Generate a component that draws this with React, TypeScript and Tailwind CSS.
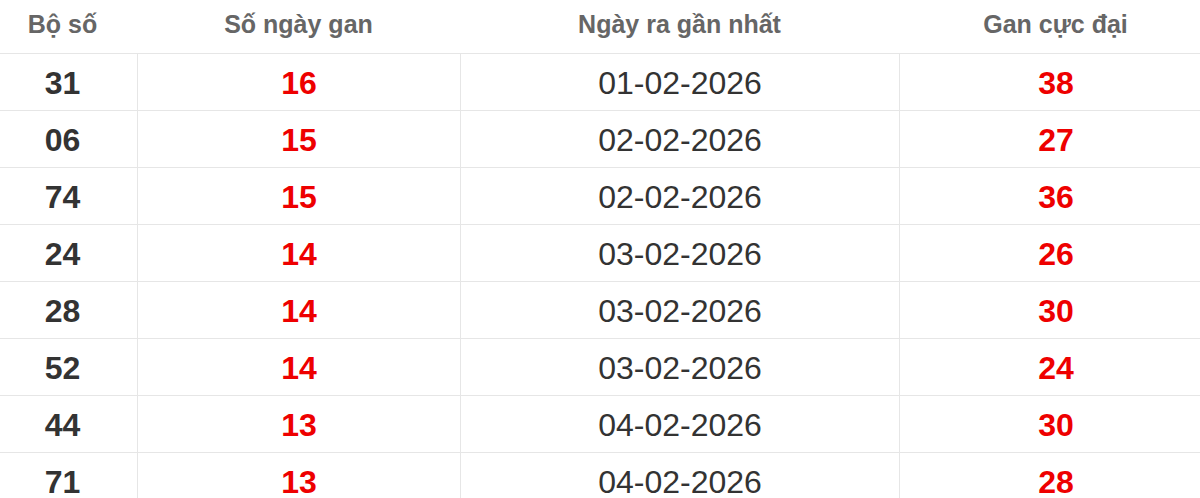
const ROWS = [
  { bo: "31", days: "16", last: "01-02-2026", max: "38" },
  { bo: "06", days: "15", last: "02-02-2026", max: "27" },
  { bo: "74", days: "15", last: "02-02-2026", max: "36" },
  { bo: "24", days: "14", last: "03-02-2026", max: "26" },
  { bo: "28", days: "14", last: "03-02-2026", max: "30" },
  { bo: "52", days: "14", last: "03-02-2026", max: "24" },
  { bo: "44", days: "13", last: "04-02-2026", max: "30" },
  { bo: "71", days: "13", last: "04-02-2026", max: "28" },
];

const HEADERS = ["Bộ số", "Số ngày gan", "Ngày ra gần nhất", "Gan cực đại"];

export default function App() {
  return (
    <div className="w-[1200px] h-[498px] overflow-hidden bg-white" style={{ fontFamily: '"Liberation Sans", Arial, sans-serif' }}>
      <div className="ml-[-12px] w-[1224px]">
        {/* header */}
        <div className="grid grid-cols-[149px_323px_439px_313px] h-[54px] border-b border-[#e6e6e6]">
          {HEADERS.map(h => (
            <div key={h} className="flex items-center justify-center pb-[4px] text-[25px] font-bold text-[#666]">
              {h}
            </div>
          ))}
        </div>

        {/* rows */}
        {ROWS.map(r => (
          <div key={r.bo} className="grid grid-cols-[149px_323px_439px_313px] h-[57px] border-b border-[#e6e6e6]">
            <div className="flex items-center justify-center pt-[1px] text-[32px] font-bold text-[#333]">{r.bo}</div>
            <div className="flex items-center justify-center pt-[1px] border-l border-[#e6e6e6] text-[32px] font-bold text-[#ee0000]">{r.days}</div>
            <div className="flex items-center justify-center pt-[1px] border-l border-[#e6e6e6] text-[32px] text-[#333]">{r.last}</div>
            <div className="flex items-center justify-center pt-[1px] border-l border-[#e6e6e6] text-[32px] font-bold text-[#ee0000]">{r.max}</div>
          </div>
        ))}
      </div>
    </div>
  );
}
